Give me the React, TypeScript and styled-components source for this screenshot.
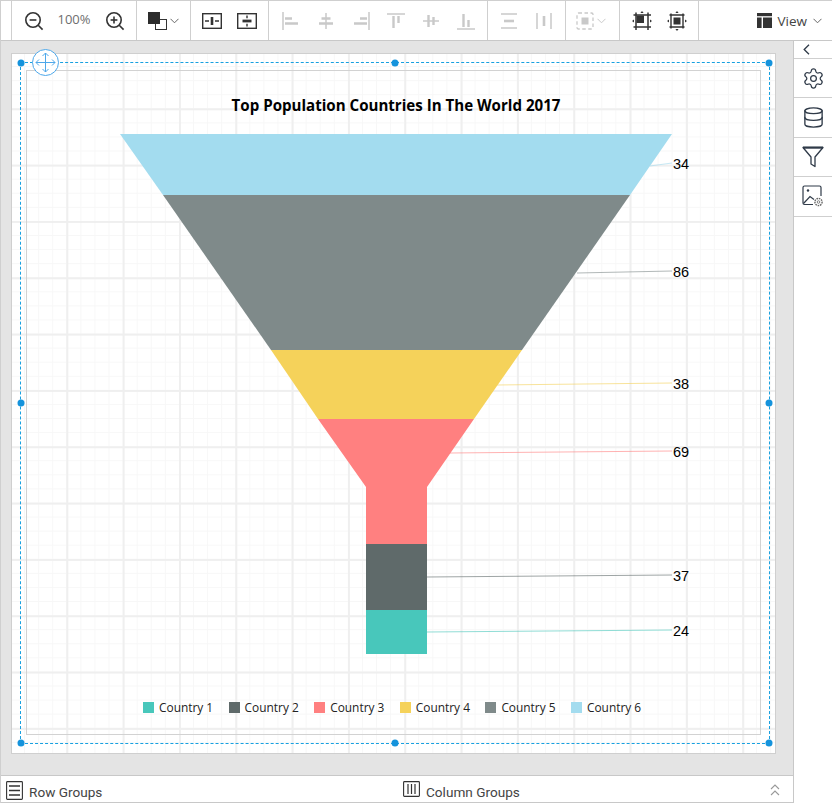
import React from "react";
import styled, { createGlobalStyle } from "styled-components";
import { Settings, Database } from "lucide-react";

const Global = createGlobalStyle`
  html, body { margin: 0; padding: 0; background: #fff; }
  #root { width: 832px; height: 803px; overflow: hidden; }
  * { box-sizing: border-box; }
`;

const Shell = styled.div`
  width: 832px;
  height: 803px;
  display: flex;
  flex-direction: column;
  border-left: 1px solid #cfcfcf;
  border-top: 1px solid #cfcfcf;
  font-family: "Open Sans", "Liberation Sans", sans-serif;
  color: #333;
`;

const Toolbar = styled.div`
  height: 40px;
  flex: none;
  display: flex;
  background: #fff;
  border-bottom: 1px solid #c8c8c8;
`;

const ToolGroup = styled.div<{ $w: number; $shift?: number }>`
  width: ${(p) => p.$w}px;
  flex: none;
  display: flex;
  align-items: center;
  justify-content: center;
  padding-left: ${(p) => p.$shift ?? 0}px;
  border-right: 1px solid #cfcfcf;
`;

const Lead = styled.div`
  width: 11px;
  flex: none;
  border-right: 1px solid #cfcfcf;
`;

const ToolButton = styled.div<{ $w?: number }>`
  width: ${(p) => p.$w ?? 35}px;
  height: 40px;
  flex: none;
  display: flex;
  align-items: center;
  justify-content: center;
`;

const ZoomText = styled.span`
  width: 46px;
  text-align: center;
  font-size: 13px;
  line-height: 18px;
  margin-bottom: 3px;
  color: #6e6e6e;
`;

const ViewGroup = styled.div`
  flex: 1;
  display: flex;
  align-items: center;
  justify-content: flex-end;
  gap: 6px;
  padding-right: 10px;
  font-size: 13.5px;
  color: #444;
`;

const Main = styled.div`
  flex: 1;
  min-height: 0;
  display: flex;
`;

const Workspace = styled.div`
  width: 792px;
  flex: none;
  display: flex;
  flex-direction: column;
`;

const Canvas = styled.div`
  height: 734px;
  flex: none;
  background: #e4e4e4;
  padding: 12px 17px 21px 10px;
  display: flex;
`;

const Paper = styled.div`
  position: relative;
  flex: 1;
  background-color: #fff;
  border: 1px solid #cfcfcf;
  padding: 16px 14px 18px 14px;
  display: flex;
  background-image:
    linear-gradient(to right, #efefef 0, #efefef 1.5px, transparent 1.5px),
    linear-gradient(to bottom, #efefef 0, #efefef 1.5px, transparent 1.5px),
    linear-gradient(to right, #f7f7f7 0, #f7f7f7 1px, transparent 1px),
    linear-gradient(to bottom, #f7f7f7 0, #f7f7f7 1px, transparent 1px);
  background-size: 56.33px 56.33px, 56.33px 56.33px, 14.08px 14.08px, 14.08px 14.08px;
  background-position: -2px -2px;
`;

const ReportBox = styled.div`
  flex: 1;
  border: 1px solid #d2d2d2;
  display: flex;
  flex-direction: column;
  align-items: stretch;
`;

const ChartTitle = styled.div`
  font-family: "Open Sans", sans-serif;
  font-weight: 700;
  font-size: 15.1px;
  line-height: 20px;
  color: #000;
  text-align: center;
  margin-top: 24px;
  padding-left: 5px;
  white-space: nowrap;
`;

const FunnelSvg = styled.svg`
  display: block;
  width: 733px;
  height: 568px;
  flex: none;
`;

const Legend = styled.div`
  display: flex;
  justify-content: flex-start;
  padding-left: 116px;
  margin-top: 15px;
`;

const LegendItem = styled.div`
  width: 85.6px;
  flex: none;
  display: flex;
  align-items: center;
  gap: 5px;
  font-size: 11.9px;
  line-height: 18px;
  color: #222;
  white-space: nowrap;
`;

const Swatch = styled.span<{ $c: string }>`
  width: 11px;
  height: 11px;
  flex: none;
  background: ${(p) => p.$c};
`;

const SelectionFrame = styled.div`
  position: absolute;
  left: 8px;
  right: 5px;
  top: 8px;
  bottom: 9px;
  border: 1px dashed #17a0e0;
  pointer-events: none;
`;

const Handle = styled.span<{ $x: string; $y: string }>`
  position: absolute;
  width: 7px;
  height: 7px;
  border-radius: 50%;
  background: #1593dc;
  left: ${(p) => p.$x};
  top: ${(p) => p.$y};
  transform: translate(-50%, -50%);
`;

const MoveHandle = styled.div`
  position: absolute;
  left: 11px;
  top: -14px;
  width: 27px;
  height: 27px;
  border-radius: 50%;
  background: #fff;
  border: 1px solid #4ea8ea;
  display: flex;
  align-items: center;
  justify-content: center;
`;

const GroupBar = styled.div`
  flex: 1;
  background: #fff;
  border-top: 1px solid #c8c8c8;
  border-bottom: 1px solid #c8c8c8;
  display: flex;
  align-items: flex-start;
  font-family: "Roboto", sans-serif;
  font-size: 13.6px;
  color: #444;
`;

const GroupLabel = styled.div<{ $w: number; $pad?: number }>`
  width: ${(p) => p.$w}px;
  flex: none;
  height: 100%;
  display: flex;
  align-items: flex-start;
  gap: 6px;
  padding-top: 5px;
  padding-left: ${(p) => p.$pad ?? 0}px;
  & > span { padding-top: 2px; line-height: 18px; }
`;

const Collapse = styled.div`
  flex: 1;
  display: flex;
  justify-content: flex-end;
  padding: 8px 13px 0 0;
`;

const Sidebar = styled.div`
  flex: 1;
  background: #fff;
  border-left: 1px solid #c8c8c8;
  display: flex;
  flex-direction: column;
`;

const SideToggle = styled.div`
  height: 18px;
  flex: none;
  display: flex;
  align-items: center;
  justify-content: center;
  padding-right: 14px;
  border-bottom: 1px solid #cfcfcf;
`;

const SideItem = styled.div`
  height: 39.4px;
  flex: none;
  display: flex;
  align-items: center;
  justify-content: center;
  border-bottom: 1px solid #cfcfcf;
  color: #2f3a48;
`;

const DARK = "#333";
const OFF = "#c9c9c9";

const Ico: React.FC<{ s?: number; children: React.ReactNode }> = ({ s = 20, children }) => (
  <svg width={s} height={s} viewBox="0 0 20 20" fill="none" stroke={DARK} strokeWidth={1.4}>
    {children}
  </svg>
);

const ZoomIcon: React.FC<{ plus?: boolean }> = ({ plus }) => (
  <Ico s={20}>
    <circle cx="9" cy="9" r="7.2" strokeWidth={1.6} />
    <path d="M14.2 14.2 L18.6 18.6" strokeWidth={1.6} />
    <path d="M5.6 9 H12.4" strokeWidth={1.6} />
    {plus && <path d="M9 5.6 V12.4" strokeWidth={1.6} />}
  </Ico>
);

const Chevron: React.FC<{ c?: string }> = ({ c = "#666" }) => (
  <svg width="9" height="6" viewBox="0 0 9 6" fill="none" stroke={c} strokeWidth={1}>
    <path d="M0.5 0.8 L4.5 4.8 L8.5 0.8" />
  </svg>
);

const ColorIcon = () => (
  <svg width="19" height="18" viewBox="0 0 19 18">
    <rect x="7.5" y="7.5" width="11" height="10" fill="#fff" stroke="#333" />
    <rect x="0" y="0" width="12" height="12" fill="#2c2c2c" />
  </svg>
);

const SplitV = () => (
  <svg width="20" height="16" viewBox="0 0 20 16" fill="none" stroke={DARK} strokeWidth={1.4}>
    <rect x="0.7" y="0.7" width="18.6" height="14.6" />
    <path d="M3 8 H7 M13 8 H17" />
    <path d="M10 4 V12" strokeWidth={2.6} />
  </svg>
);

const SplitH = () => (
  <svg width="20" height="16" viewBox="0 0 20 16" fill="none" stroke={DARK} strokeWidth={1.4}>
    <rect x="0.7" y="0.7" width="18.6" height="14.6" />
    <path d="M10 2.5 V5.2 M10 10.8 V13.5" />
    <path d="M5.5 8 H14.5" strokeWidth={2.8} />
  </svg>
);

const Off: React.FC<{ children: React.ReactNode }> = ({ children }) => (
  <svg width="20" height="20" viewBox="0 0 20 20" fill="none" stroke={OFF} strokeWidth={1.5}>
    {children}
  </svg>
);

const AlignIcons: React.ReactNode[] = [
  <Off key="l"><path d="M2 1 V19" /><path d="M4 7.5 H11 M4 12.5 H17" strokeWidth={2.4} /></Off>,
  <Off key="c"><path d="M10 2 V18" /><path d="M5.5 7.5 H14.5 M3 12.5 H17" strokeWidth={2.4} /></Off>,
  <Off key="r"><path d="M18 1 V19" /><path d="M9 7.5 H16 M3 12.5 H16" strokeWidth={2.4} /></Off>,
  <Off key="t"><path d="M1 3 H19" /><path d="M7.5 5 V17 M12.5 5 V12" strokeWidth={2.4} /></Off>,
  <Off key="m"><path d="M2 10 H18" /><path d="M7.5 4 V16 M12.5 6 V14" strokeWidth={2.4} /></Off>,
  <Off key="b"><path d="M1 18 H19" /><path d="M7.5 3 V16 M12.5 9 V16" strokeWidth={2.4} /></Off>,
];

const DistH = () => (
  <Off>
    <path d="M2 3 H18 M2 17 H18" />
    <path d="M5 10 H15" strokeWidth={2.6} />
  </Off>
);

const DistV = () => (
  <Off>
    <path d="M3 2 V18 M17 2 V18" />
    <path d="M10 5 V15" strokeWidth={2.6} />
  </Off>
);

const SpaceIcon = () => (
  <svg width="18" height="18" viewBox="0 0 18 18" fill="none" stroke={OFF} strokeWidth={1.3}>
    <rect x="1" y="1" width="16" height="16" rx="1.5" strokeDasharray="3.5 2.5" />
    <rect x="5.5" y="5.5" width="7" height="7" fill={OFF} stroke="none" />
  </svg>
);

const CropOuter = () => (
  <svg width="20" height="20" viewBox="0 0 20 20" fill="none" stroke={DARK} strokeWidth={1.5}>
    <rect x="4.5" y="4.5" width="7.5" height="7.5" fill="#333" stroke="none" />
    <path d="M4 1.5 V19 M16 1.5 V19 M1.5 4 H19 M1.5 16 H19" />
    <path d="M0 10 L2 8.4 V11.6 Z M20 10 L18 8.4 V11.6 Z M10 0 L8.4 2 H11.6 Z" fill="#333" stroke="none" />
  </svg>
);

const CropInner = () => (
  <svg width="20" height="20" viewBox="0 0 20 20" fill="none" stroke={DARK} strokeWidth={1.4}>
    <path d="M4 2.5 V17.5 M16 2.5 V17.5 M2.5 4 H17.5 M2.5 16 H17.5" />
    <rect x="6.5" y="6.5" width="7" height="7" fill="#333" stroke="none" />
    <path d="M10 0 L8.4 2 H11.6 Z M10 20 L8.4 18 H11.6 Z M0 10 L2 8.4 V11.6 Z M20 10 L18 8.4 V11.6 Z" fill="#333" stroke="none" />
  </svg>
);

const LayoutIcon = () => (
  <svg width="15" height="15" viewBox="0 0 15 15" fill="#333">
    <rect x="0" y="0" width="15" height="3.2" />
    <rect x="0" y="4.5" width="4.6" height="10.5" />
    <rect x="6" y="4.5" width="9" height="10.5" />
  </svg>
);

const FilterIcon = () => (
  <svg width="22" height="22" viewBox="0 0 22 22" fill="none" stroke="#2f3a48" strokeWidth={1.3}>
    <path d="M1 1.5 H21 L13 11 V20.5 L9 18 V11 Z" strokeLinejoin="round" />
    <path d="M1 1.6 H21" strokeWidth={2} />
  </svg>
);

const ImageGear = () => (
  <svg width="22" height="22" viewBox="0 0 22 22" fill="none" stroke="#2f3a48" strokeWidth={1.2}>
    <path d="M11 19.5 H2.5 A1.5 1.5 0 0 1 1 18 V2.5 A1.5 1.5 0 0 1 2.5 1 H17.5 A1.5 1.5 0 0 1 19 2.5 V11" />
    <path d="M1.5 18.5 L8 11.5 L12 14.5" />
    <circle cx="6" cy="5.5" r="1.2" fill="#2f3a48" stroke="none" />
    <circle cx="16.5" cy="17" r="3.6" stroke="#666" strokeWidth={1.4} strokeDasharray="1.6 0.8" />
    <circle cx="16.5" cy="17" r="1.3" stroke="#666" strokeWidth={0.8} />
  </svg>
);

const RowsIcon = () => (
  <svg width="17" height="19" viewBox="0 0 17 19" fill="none" stroke={DARK} strokeWidth={1.1}>
    <rect x="0.6" y="0.6" width="15.8" height="17.8" rx="0.8" />
    <path d="M3 5 H14 M3 9.5 H14 M3 14 H14" strokeWidth={1.3} />
  </svg>
);

const ColsIcon = () => (
  <svg width="17" height="16" viewBox="0 0 17 16" fill="none" stroke={DARK} strokeWidth={1.1}>
    <rect x="0.6" y="0.6" width="15.8" height="14.8" rx="0.8" />
    <path d="M5 3 V13 M8.5 3 V13 M12 3 V13" strokeWidth={1.2} />
  </svg>
);

const DoubleUp = () => (
  <svg width="10" height="12" viewBox="0 0 10 12" fill="none" stroke="#999" strokeWidth={1.1}>
    <path d="M1 5 L5 1 L9 5 M1 11 L5 7 L9 11" />
  </svg>
);

const MoveIcon = () => (
  <svg width="21" height="21" viewBox="0 0 21 21" fill="none" stroke="#4ea8ea" strokeWidth={1}>
    <path d="M10.5 1 V20 M1 10.5 H20" />
    <path d="M7.5 4 L10.5 1 L13.5 4 M7.5 17 L10.5 20 L13.5 17 M4 7.5 L1 10.5 L4 13.5 M17 7.5 L20 10.5 L17 13.5" />
  </svg>
);

type Seg = { points: string; fill: string };

const segments: Seg[] = [
  { points: "120,134 672,134 630,195 163,195", fill: "#a3dcef" },
  { points: "163,195 630,195 522,350 271,350", fill: "#7f8a8a" },
  { points: "271,350 522,350 474,419 318,419", fill: "#f5d25a" },
  { points: "318,419 474,419 427,487 427,544 366,544 366,487", fill: "#ff8080" },
  { points: "366,544 427,544 427,610 366,610", fill: "#5f6a6a" },
  { points: "366,610 427,610 427,654 366,654", fill: "#48c7bb" },
];

type Lab = { x1: number; y1: number; y2: number; c: string; v: string };

const labels: Lab[] = [
  { x1: 650, y1: 166, y2: 163, c: "#a3dcef", v: "34" },
  { x1: 577, y1: 273, y2: 271, c: "#7f8a8a", v: "86" },
  { x1: 497, y1: 385, y2: 383, c: "#f5d25a", v: "38" },
  { x1: 450, y1: 453, y2: 451, c: "#ff8080", v: "69" },
  { x1: 427, y1: 577, y2: 575, c: "#5f6a6a", v: "37" },
  { x1: 427, y1: 632, y2: 630, c: "#48c7bb", v: "24" },
];

const legend: [string, string][] = [
  ["Country 1", "#48c7bb"],
  ["Country 2", "#5f6a6a"],
  ["Country 3", "#ff8080"],
  ["Country 4", "#f5d25a"],
  ["Country 5", "#7f8a8a"],
  ["Country 6", "#a3dcef"],
];

const handles: [string, string][] = [
  ["0%", "0%"],
  ["50%", "0%"],
  ["100%", "0%"],
  ["0%", "50%"],
  ["100%", "50%"],
  ["0%", "100%"],
  ["50%", "100%"],
  ["100%", "100%"],
];

export default function App() {
  return (
    <Shell>
      <Global />
      <Toolbar>
        <Lead />
        <ToolGroup $w={125}>
          <ToolButton $w={35}><ZoomIcon /></ToolButton>
          <ZoomText>100%</ZoomText>
          <ToolButton $w={35}><ZoomIcon plus /></ToolButton>
        </ToolGroup>
        <ToolGroup $w={54} $shift={3}>
          <ColorIcon />
          <ToolButton $w={16}><Chevron /></ToolButton>
        </ToolGroup>
        <ToolGroup $w={78}>
          <ToolButton><SplitV /></ToolButton>
          <ToolButton><SplitH /></ToolButton>
        </ToolGroup>
        <ToolGroup $w={219}>
          {AlignIcons.map((icon, i) => (
            <ToolButton key={i}>{icon}</ToolButton>
          ))}
        </ToolGroup>
        <ToolGroup $w={78}>
          <ToolButton><DistH /></ToolButton>
          <ToolButton><DistV /></ToolButton>
        </ToolGroup>
        <ToolGroup $w={54}>
          <SpaceIcon />
          <ToolButton $w={16}><Chevron c={OFF} /></ToolButton>
        </ToolGroup>
        <ToolGroup $w={79}>
          <ToolButton><CropOuter /></ToolButton>
          <ToolButton><CropInner /></ToolButton>
        </ToolGroup>
        <ViewGroup>
          <LayoutIcon />
          <span>View</span>
          <Chevron />
        </ViewGroup>
      </Toolbar>
      <Main>
        <Workspace>
          <Canvas>
            <Paper>
              <ReportBox>
                <ChartTitle>Top Population Countries In The World 2017</ChartTitle>
                <FunnelSvg viewBox="27 115 733 568">
                  {segments.map((s) => (
                    <polygon key={s.fill} points={s.points} fill={s.fill} />
                  ))}
                  {labels.map((l) => (
                    <g key={l.v}>
                      <line x1={l.x1} y1={l.y1} x2={672} y2={l.y2} stroke={l.c} strokeWidth={1} opacity={0.6} />
                      <text x={673} y={l.y2 + 6} fontFamily="Liberation Sans, sans-serif" fontSize={14.5} fill="#000">
                        {l.v}
                      </text>
                    </g>
                  ))}
                </FunnelSvg>
                <Legend>
                  {legend.map(([name, c]) => (
                    <LegendItem key={name}>
                      <Swatch $c={c} />
                      {name}
                    </LegendItem>
                  ))}
                </Legend>
              </ReportBox>
              <SelectionFrame>
                {handles.map(([x, y]) => (
                  <Handle key={x + y} $x={x} $y={y} />
                ))}
                <MoveHandle>
                  <MoveIcon />
                </MoveHandle>
              </SelectionFrame>
            </Paper>
          </Canvas>
          <GroupBar>
            <GroupLabel $w={402} $pad={5}>
              <RowsIcon />
              <span>Row Groups</span>
            </GroupLabel>
            <GroupLabel $w={356}>
              <ColsIcon />
              <span>Column Groups</span>
            </GroupLabel>
            <Collapse>
              <DoubleUp />
            </Collapse>
          </GroupBar>
        </Workspace>
        <Sidebar>
          <SideToggle>
            <svg width="7" height="11" viewBox="0 0 7 11" fill="none" stroke="#2f3a48" strokeWidth={1.3}>
              <path d="M6 0.8 L1.2 5.5 L6 10.2" />
            </svg>
          </SideToggle>
          <SideItem><Settings size={23} strokeWidth={1.3} /></SideItem>
          <SideItem><Database size={23} strokeWidth={1.4} /></SideItem>
          <SideItem><FilterIcon /></SideItem>
          <SideItem><ImageGear /></SideItem>
        </Sidebar>
      </Main>
    </Shell>
  );
}
